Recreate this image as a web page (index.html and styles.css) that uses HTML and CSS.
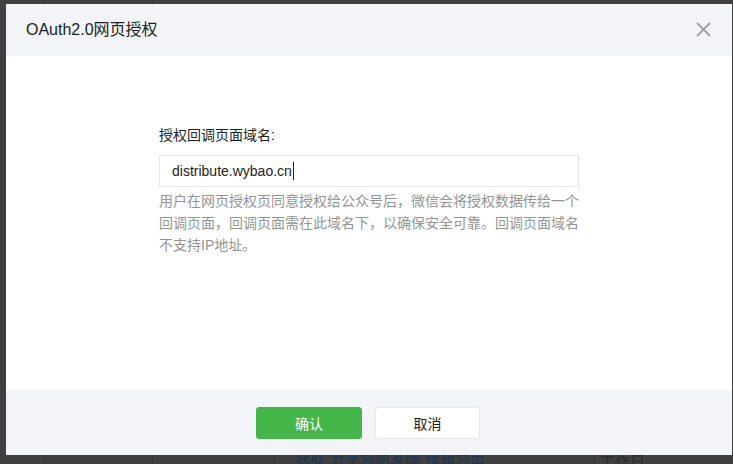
FILE: index.html
```html
<!DOCTYPE html>
<html lang="zh-CN">
<head>
<meta charset="utf-8">
<title>OAuth2.0网页授权</title>
<link rel="stylesheet" href="styles.css">
</head>
<body>
<div class="page">
  <div class="col col-a"></div>
  <div class="col col-b"></div>
  <div class="col col-c"></div>
  <div class="col col-d">
    <div class="bg-link">获取“分享到朋友圈”按钮点击</div>
  </div>
  <div class="col col-e">
    <div class="bg-gray">工作日</div>
  </div>
</div>
<div class="overlay">
  <div class="dialog">
    <div class="dialog-hd">
      <h3 class="dialog-title">OAuth2.0网页授权</h3>
      <button class="close" aria-label="关闭">
        <svg width="15" height="15" viewBox="0 0 15 15"><path d="M1 1 L14 14 M14 1 L1 14" stroke="#a3a3a3" stroke-width="2" fill="none"/></svg>
      </button>
    </div>
    <div class="dialog-bd">
      <div class="form">
        <label class="form-label">授权回调页面域名:</label>
        <div class="input"><span class="input-text">distribute.wybao.cn</span><span class="caret"></span></div>
        <p class="tips">用户在网页授权页同意授权给公众号后，微信会将授权数据传给一个回调页面，回调页面需在此域名下，以确保安全可靠。回调页面域名不支持IP地址。</p>
      </div>
    </div>
    <div class="dialog-ft">
      <button class="btn btn-primary">确认</button>
      <button class="btn btn-default">取消</button>
    </div>
  </div>
</div>
</body>
</html>
```
FILE: styles.css
```css
* { box-sizing: border-box; }
html, body {
  margin: 0;
  padding: 0;
  width: 733px;
  height: 464px;
  overflow: hidden;
}
body {
  background: #404040;
  font-family: "Liberation Sans", "Noto Sans CJK SC", sans-serif;
  font-size: 14px;
  color: #222;
}
.page {
  display: flex;
  height: 464px;
}
.col {
  border-right: 1px solid #363636;
  position: relative;
}
.col-a { width: 45px; }
.col-b { width: 108px; }
.col-c { width: 122px; }
.col-d { width: 320px; }
.col-e { flex: 1; border-right: 0; }
.bg-link {
  position: absolute;
  left: 20px;
  top: 448px;
  font-size: 15px;
  line-height: 20px;
  color: #1d3553;
  white-space: nowrap;
}
.bg-gray {
  position: absolute;
  left: 5px;
  top: 452px;
  font-size: 15px;
  line-height: 20px;
  color: #2c2c2c;
  white-space: nowrap;
}
.overlay {
  position: absolute;
  left: 6px;
  top: 4px;
}
.dialog {
  width: 726px;
  height: 451px;
  background: #fff;
  display: flex;
  flex-direction: column;
}
.dialog-hd {
  height: 52px;
  background: #f3f4f8;
  display: flex;
  align-items: center;
  justify-content: space-between;
  padding: 0 20px 0 20px;
}
.dialog-title {
  margin: 0;
  font-size: 16px;
  font-weight: normal;
  color: #222;
  line-height: 22px;
}
.close {
  border: 0;
  background: none;
  padding: 0;
  margin: -1px 1px 0 0;
  width: 15px;
  height: 15px;
  display: block;
}
.close svg { display: block; }
.dialog-bd {
  flex: 1;
  padding-top: 68px;
}
.form {
  width: 420px;
  margin: 0 auto;
}
.form-label {
  display: block;
  line-height: 22px;
  color: #222;
  margin-bottom: 9px;
}
.input {
  height: 32px;
  border: 1px solid #e7e7eb;
  padding-left: 12px;
  display: flex;
  align-items: center;
  color: #222;
}
.caret {
  width: 1px;
  height: 18px;
  background: #222;
  margin-left: 1px;
}
.tips {
  margin: 3px 0 0;
  line-height: 22px;
  color: #949494;
}
.dialog-ft {
  height: 65px;
  background: #f3f4f8;
  display: flex;
  justify-content: center;
  gap: 13px;
  padding-top: 17px;
  padding-right: 2px;
}
.btn {
  height: 32px;
  border-radius: 3px;
  font-family: inherit;
  font-size: 14px;
  padding: 0;
}
.btn-primary {
  width: 106px;
  background: #44b549;
  border: 1px solid #44b549;
  color: #fff;
}
.btn-default {
  width: 105px;
  background: #fff;
  border: 1px solid #e4e8eb;
  color: #222;
}
```
